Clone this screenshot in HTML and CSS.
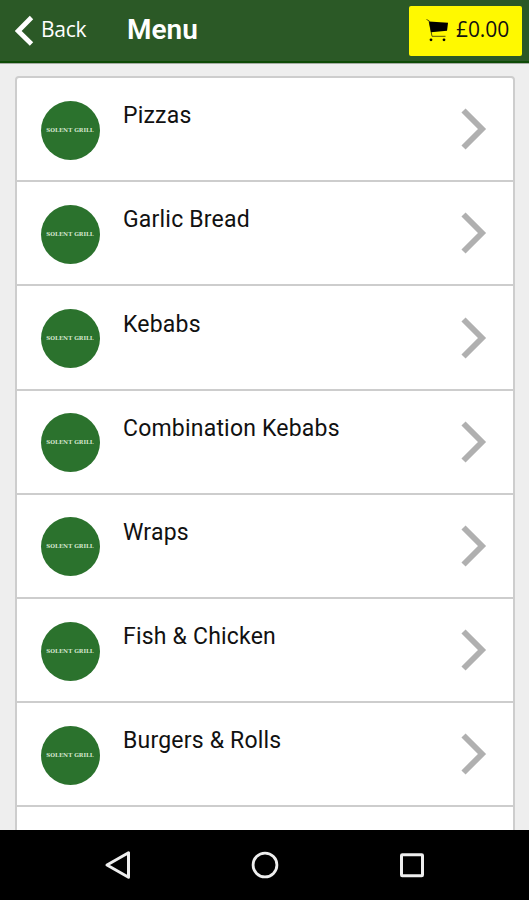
FILE: index.html
```html
<!DOCTYPE html>
<html lang="en">

<head>
    <meta charset="UTF-8">
    <meta name="viewport" content="width=device-width, initial-scale=1.0">
    <title>Menu - Solent Grill</title>
    <link rel="stylesheet" href="styles.css">
</head>

<body>

    <!-- Header -->
    <header class="header">
        <a class="back" href="#">
            <svg width="19" height="32" viewBox="0 0 19 32"><path d="M16.5 2.5 L3.2 16 L16.5 29" fill="none" stroke="#fff" stroke-width="4.8"/></svg>
            <span>Back</span>
        </a>
        <h1>Menu</h1>
        <a class="basket" href="#">
            <svg width="23" height="24" viewBox="0 0 23 24">
                <path d="M0.5 1.5 L3 2.7 L6 18.3 H19.5" fill="none" stroke="#55550a" stroke-width="1"/>
                <path d="M3 3.6 L22 4.8 L21 12.8 L5 14.2 Z" fill="#000"/>
                <circle cx="5" cy="21.8" r="1.4"/>
                <circle cx="18" cy="21.8" r="1.4"/>
            </svg>
            <span>£0.00</span>
        </a>
    </header>

    <!-- Menu categories -->
    <main class="content">
        <div class="menu-list" id="menuList"></div>
    </main>

    <!-- Phone buttons -->
    <nav class="navbar">
        <svg width="28" height="30" viewBox="0 0 28 30"><path d="M3 15 L24.5 2.8 V27.2 Z" fill="none" stroke="#eee" stroke-width="3" stroke-linejoin="round"/></svg>
        <svg width="28" height="30" viewBox="0 0 28 30"><circle cx="14" cy="15" r="11.9" fill="none" stroke="#eee" stroke-width="2.8"/></svg>
        <svg width="28" height="30" viewBox="0 0 28 30"><rect x="3.5" y="4.8" width="21" height="21" rx="0.8" fill="none" stroke="#eee" stroke-width="3"/></svg>
    </nav>

    <script>
        const categories = ['Pizzas', 'Garlic Bread', 'Kebabs', 'Combination Kebabs', 'Wraps', 'Fish & Chicken', 'Burgers & Rolls'];

        function renderMenu() {
            const list = document.getElementById('menuList');
            categories.forEach(name => {
                list.innerHTML += `
                    <a class="menu-item" href="#">
                        <div class="logo">SOLENT GRILL</div>
                        <div class="name">${name.replace('&', '&amp;')}</div>
                        <svg class="arrow" width="28" height="44" viewBox="0 0 28 44"><path d="M4.5 3.5 L23 22 L4.5 40.5" fill="none" stroke="#b0b0b0" stroke-width="5.8"/></svg>
                    </a>
                `;
            });
        }

        renderMenu();
    </script>

</body>

</html>
```
FILE: styles.css
```css
* {
    box-sizing: border-box;
}

body {
    margin: 0;
    height: 100vh;
    display: flex;
    flex-direction: column;
    overflow: hidden;
    background: #eee;
    font-family: Roboto, sans-serif;
}

a {
    color: inherit;
    text-decoration: none;
}

svg {
    display: block;
    flex: none;
}

/* Header */
.header {
    flex: none;
    display: flex;
    height: 63px;
    padding-left: 15px;
    background: #2b5926;
    border-bottom: 2px solid #0d4a05;
    box-shadow: 0 1px 0 #a5aca4;
    color: white;
}

.back {
    display: flex;
    width: 112px;
    padding-top: 15px;
    font-family: "Open Sans", sans-serif;
    font-size: 21px;
    line-height: 28px;
    letter-spacing: -0.3px;
}

.back span {
    margin-left: 7px;
}

.header h1 {
    flex: 1;
    margin: 0;
    padding-top: 14px;
    font-size: 28px;
    font-weight: 600;
    line-height: 32px;
}

.basket {
    display: flex;
    width: 113px;
    height: 50px;
    margin: 6px 7px 0 0;
    padding: 12px 0 0 17px;
    background: #fff900;
    border-radius: 2px;
    color: #111;
    font-family: "Open Sans", sans-serif;
    font-size: 21px;
    line-height: 22px;
}

.basket span {
    margin-left: 7px;
    letter-spacing: -0.1px;
}

/* Menu categories */
.content {
    flex: 1;
    min-height: 0;
    padding: 13px 14px 0 15px;
    overflow: hidden;
}

.menu-list {
    height: 800px;
    background: white;
    border: 2px solid #cdcdcd;
    border-radius: 4px;
}

.menu-item {
    display: flex;
    height: 104.2px;
    padding-left: 23.5px;
    border-bottom: 2px solid #cdcdcd;
    color: #111;
}

.logo {
    width: 59px;
    height: 59px;
    margin-top: 22.7px;
    border-radius: 50%;
    background: #2b722d;
    color: #d5e5cd;
    font-family: "DejaVu Serif", serif;
    font-size: 5.5px;
    font-weight: bold;
    line-height: 59px;
    text-align: center;
    white-space: nowrap;
}

.name {
    flex: 1;
    margin: 24.2px 0 0 23.5px;
    font-size: 23px;
    line-height: 28px;
    letter-spacing: 0.2px;
}

.arrow {
    margin: 29.2px 26px 0 0;
}

/* Phone buttons */
.navbar {
    flex: none;
    display: flex;
    justify-content: center;
    gap: 119px;
    height: 70px;
    padding-top: 20px;
    background: black;
}
```
